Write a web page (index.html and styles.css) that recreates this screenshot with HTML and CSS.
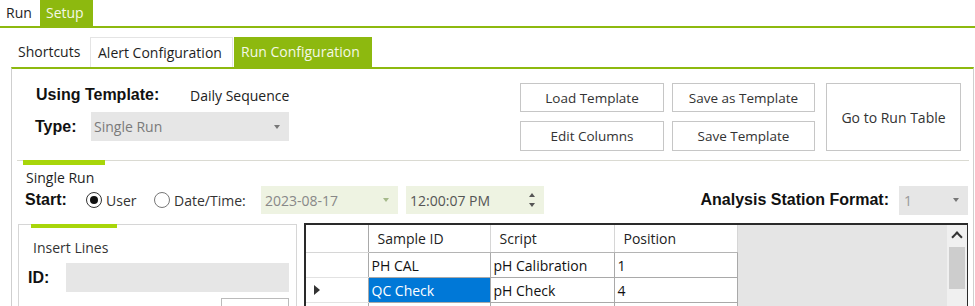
FILE: index.html
```html
<!DOCTYPE html>
<html lang="en">
<head>
    <meta charset="UTF-8">
    <title>Run Configuration</title>
    <link rel="stylesheet" href="styles.css">
</head>
<body>
    <div class="menubar">
        <div class="menu-tab">Run</div>
        <div class="menu-tab active">Setup</div>
    </div>

    <div class="tabs">
        <div class="tab tab-plain">Shortcuts</div>
        <div class="tab tab-open">Alert Configuration</div>
        <div class="tab tab-active">Run Configuration</div>
    </div>

    <div class="panel">
        <div class="template-row">
            <div class="template-info">
                <div class="info-line">
                    <span class="bold-label using-label">Using Template:</span>
                    <span class="template-name">Daily Sequence</span>
                </div>
                <div class="info-line type-line">
                    <span class="bold-label type-label">Type:</span>
                    <div class="select type-select">
                        <span>Single Run</span>
                        <span class="caret"></span>
                    </div>
                </div>
            </div>
            <div class="actions">
                <div class="action-grid">
                    <button class="btn">Load Template</button>
                    <button class="btn">Save as Template</button>
                    <button class="btn">Edit Columns</button>
                    <button class="btn">Save Template</button>
                </div>
                <button class="btn btn-tall">Go to Run Table</button>
            </div>
        </div>

        <div class="section-bar"></div>
        <div class="section-title">Single Run</div>
        <div class="start-row">
            <span class="bold-label start-label">Start:</span>
            <span class="radio checked"></span>
            <span class="radio-text user-text">User</span>
            <span class="radio"></span>
            <span class="radio-text date-text">Date/Time:</span>
            <div class="picker date-picker">
                <span>2023-08-17</span>
                <span class="caret caret-green"></span>
            </div>
            <div class="picker time-picker">
                <span>12:00:07 PM</span>
                <span class="spinner">
                    <span class="spin-up"></span>
                    <span class="spin-down"></span>
                </span>
            </div>
            <span class="bold-label station-label">Analysis Station Format:</span>
            <div class="select station-select">
                <span>1</span>
                <span class="caret"></span>
            </div>
        </div>

        <div class="lower">
            <div class="insert-panel">
                <div class="insert-bar"></div>
                <div class="insert-title">Insert Lines</div>
                <div class="id-row">
                    <span class="bold-label id-label">ID:</span>
                    <div class="id-input"></div>
                </div>
                <div class="small-btn"></div>
            </div>

            <div class="grid">
                <table class="run-table">
                    <colgroup>
                        <col class="col-head">
                        <col class="col-id">
                        <col class="col-script">
                        <col class="col-pos">
                    </colgroup>
                    <thead>
                        <tr>
                            <th class="row-head"></th>
                            <th>Sample ID</th>
                            <th>Script</th>
                            <th>Position</th>
                        </tr>
                    </thead>
                    <tbody>
                        <tr>
                            <td class="row-head"></td>
                            <td>PH CAL</td>
                            <td>pH Calibration</td>
                            <td>1</td>
                        </tr>
                        <tr>
                            <td class="row-head"><span class="row-marker"></span></td>
                            <td class="selected">QC Check</td>
                            <td>pH Check</td>
                            <td>4</td>
                        </tr>
                        <tr>
                            <td class="row-head"></td>
                            <td></td>
                            <td></td>
                            <td></td>
                        </tr>
                    </tbody>
                </table>
                <div class="grid-empty"></div>
                <div class="scrollbar">
                    <span class="scroll-up"></span>
                    <div class="scroll-thumb"></div>
                </div>
            </div>
        </div>
    </div>
</body>
</html>
```

FILE: styles.css
```css
html, body {
    margin: 0;
    padding: 0;
    height: 306px;
    overflow: hidden;
    background-color: #fff;
    font-family: 'Open Sans', 'Noto Sans', sans-serif;
    font-size: 14px;
    color: #1e1e1e;
}
.menubar {
    display: flex;
    height: 26px;
    border-bottom: 2px solid #8db90f;
}
.menu-tab {
    line-height: 26px;
    font-size: 14px;
    padding-left: 6px;
    width: 34px;
}
.menu-tab.active {
    background-color: #8db90f;
    color: #f4f8e6;
    width: 47px;
}
.tabs {
    display: flex;
    margin: 9px 0 0 11px;
    height: 30px;
}
.tab {
    line-height: 30px;
    font-size: 14px;
    box-sizing: border-box;
}
.tab-plain {
    width: 79px;
    padding-left: 7px;
}
.tab-open {
    width: 143px;
    padding-left: 7px;
    border: 1px solid #e4e4e4;
    border-bottom: none;
    line-height: 29px;
}
.tab-active {
    width: 138px;
    margin-left: 1px;
    padding-left: 7px;
    background-color: #8db90f;
    color: #f4f8e6;
}
.panel {
    margin: 0 1px 0 11px;
    height: 237px;
    overflow: hidden;
    border-left: 1px solid #cfcfcf;
    border-right: 1px solid #cfcfcf;
    border-top: 2px solid #8db90f;
}
.bold-label {
    font-family: 'Liberation Sans', Arial, sans-serif;
    font-weight: bold;
    font-size: 16px;
    color: #111;
}
.template-row {
    display: flex;
    height: 91px;
    margin: 0 4px 0 5px;
    border-bottom: 1px solid #dadad2;
}
.template-info {
    padding: 14px 0 0 19px;
}
.info-line {
    display: flex;
    align-items: center;
    height: 24px;
}
.using-label {
    width: 154px;
}
.template-name {
    color: #222;
}
.type-line {
    margin-top: 5px;
    height: 29px;
    margin-left: -1px;
}
.type-label {
    width: 56px;
}
.select {
    display: flex;
    align-items: center;
    justify-content: space-between;
    background-color: #e6e6e6;
    color: #7a7a7a;
    box-sizing: border-box;
    height: 29px;
    padding: 0 9px 0 3px;
}
.type-select {
    width: 198px;
}
.caret {
    width: 0;
    height: 0;
    border-left: 3px solid transparent;
    border-right: 3px solid transparent;
    border-top: 4px solid #777;
}
.caret-green {
    border-top-color: #a5b98a;
}
.actions {
    display: flex;
    margin-left: auto;
    margin-right: 8px;
    padding-top: 14px;
}
.action-grid {
    display: grid;
    grid-template-columns: 144px 143px;
    grid-template-rows: 29px 30px;
    column-gap: 8px;
    row-gap: 9px;
}
.btn {
    font-family: 'Open Sans', 'Noto Sans', sans-serif;
    font-size: 13.5px;
    color: #333;
    background-color: #fff;
    border: 1px solid #c6c6c6;
    padding: 0;
    cursor: pointer;
}
.btn-tall {
    width: 135px;
    height: 68px;
    margin-left: 11px;
    font-size: 14px;
}
.section-bar {
    width: 82px;
    height: 5px;
    margin-left: 11px;
    margin-top: -1px;
    background-color: #a8d60a;
}
.section-title {
    margin: 4px 0 0 14px;
    line-height: 18px;
    font-size: 14px;
}
.start-row {
    display: flex;
    align-items: center;
    height: 28px;
    padding-left: 13px;
    margin-top: -1px;
}
.start-label {
    width: 61px;
}
.radio {
    flex: none;
    width: 14px;
    height: 14px;
    border: 1px solid #777;
    border-radius: 50%;
    position: relative;
}
.radio.checked {
    border-color: #333;
}
.radio.checked::after {
    content: "";
    position: absolute;
    left: 3px;
    top: 3px;
    width: 8px;
    height: 8px;
    border-radius: 50%;
    background-color: #111;
}
.radio-text {
    margin-left: 4px;
    color: #333;
}
.user-text {
    width: 48px;
}
.date-text {
    width: 87px;
}
.picker {
    display: flex;
    align-items: center;
    justify-content: space-between;
    background-color: #eef3e2;
    box-sizing: border-box;
    height: 28px;
    padding: 0 9px 0 4px;
}
.date-picker {
    width: 137px;
    color: #888;
}
.time-picker {
    width: 138px;
    margin-left: 8px;
    color: #555;
}
.spinner {
    display: flex;
    flex-direction: column;
    gap: 6px;
}
.spin-up, .spin-down {
    width: 0;
    height: 0;
    border-left: 3px solid transparent;
    border-right: 3px solid transparent;
}
.spin-up {
    border-bottom: 4px solid #555;
}
.spin-down {
    border-top: 4px solid #555;
}
.station-label {
    margin-left: auto;
    margin-right: 10px;
}
.station-select {
    width: 69px;
    margin-right: 5px;
    padding-left: 5px;
    color: #999;
}
.lower {
    display: flex;
    margin-top: 9px;
    padding-left: 6px;
}
.insert-panel {
    width: 279px;
    height: 90px;
    margin-top: 1px;
    box-sizing: border-box;
    border: 1px solid #d6d6d6;
}
.insert-bar {
    width: 86px;
    height: 4px;
    margin: -1px 0 0 12px;
    background-color: #a8d60a;
}
.insert-title {
    margin: 11px 0 0 14px;
    line-height: 18px;
    font-size: 14px;
    color: #333;
}
.id-row {
    display: flex;
    align-items: center;
    margin-top: 6px;
    padding-left: 9px;
}
.id-label {
    width: 38px;
}
.id-input {
    width: 223px;
    height: 29px;
    background-color: #e6e6e6;
}
.small-btn {
    width: 68px;
    height: 20px;
    margin: 6px 0 0 202px;
    border: 1px solid #bbb;
    box-sizing: border-box;
}
.grid {
    display: flex;
    width: 664px;
    height: 90px;
    margin-left: 7px;
    box-sizing: border-box;
    border-top: 2px solid #2a2a2a;
    border-left: 2px solid #2a2a2a;
    border-right: 1px solid #2a2a2a;
}
.run-table {
    border-collapse: collapse;
    table-layout: fixed;
    width: 431px;
    flex: none;
    font-size: 14px;
}
.col-head { width: 62px; }
.col-id { width: 122px; }
.col-script { width: 124px; }
.col-pos { width: 123px; }
.run-table th {
    font-weight: normal;
    text-align: left;
    height: 27px;
    padding: 0 0 0 9px;
    border-right: 1px solid #d6d6d6;
    border-bottom: 1px solid #b4b4b4;
    color: #222;
}
.run-table td {
    height: 24px;
    padding: 0 0 0 3px;
    border-right: 1px solid #a9a9a9;
    border-bottom: 1px solid #a9a9a9;
    white-space: nowrap;
    overflow: hidden;
    color: #111;
}
.run-table .row-head {
    border-right: 1px solid #a9a9a9;
    border-bottom: 1px solid #e2e2e2;
    padding: 0;
}
.run-table th.row-head {
    border-bottom: 1px solid #d6d6d6;
}
.run-table td.selected {
    background-color: #0078d7;
    color: #fff;
}
.row-marker {
    display: block;
    width: 0;
    height: 0;
    margin-left: 8px;
    border-top: 5px solid transparent;
    border-bottom: 5px solid transparent;
    border-left: 6px solid #333;
}
.grid-empty {
    flex: 1;
    background-color: #e5e5e5;
}
.scrollbar {
    width: 20px;
    background-color: #f0f0f0;
    display: flex;
    flex-direction: column;
    align-items: center;
}
.scroll-up {
    width: 6px;
    height: 6px;
    margin-top: 8px;
    border-left: 2px solid #333;
    border-top: 2px solid #333;
    transform: rotate(45deg);
}
.scroll-thumb {
    width: 16px;
    height: 42px;
    margin-top: 6px;
    background-color: #cdcdcd;
}
```
